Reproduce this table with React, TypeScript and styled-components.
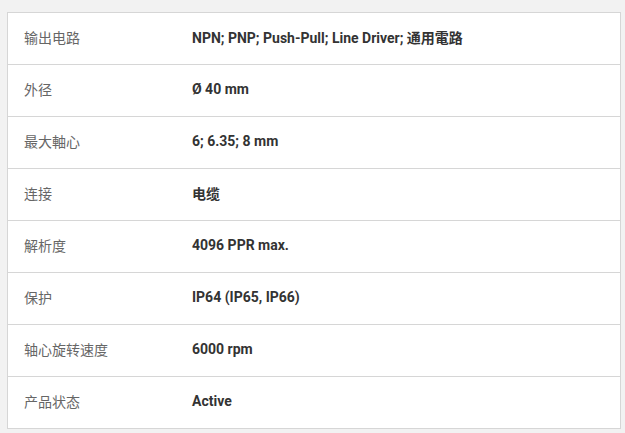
import React from 'react';
import styled, { createGlobalStyle } from 'styled-components';

const GlobalStyle = createGlobalStyle`
    html, body {
        margin: 0;
        padding: 0;
        background: #f2f2f2;
    }
    body {
        font-family: Roboto, "Noto Sans CJK SC", sans-serif;
    }
`;

const specs = [
    { label: '输出电路', value: 'NPN; PNP; Push-Pull; Line Driver; 通用電路' },
    { label: '外径', value: 'Ø 40 mm' },
    { label: '最大軸心', value: '6; 6.35; 8 mm' },
    { label: '连接', value: '电缆' },
    { label: '解析度', value: '4096 PPR max.' },
    { label: '保护', value: 'IP64 (IP65, IP66)' },
    { label: '轴心旋转速度', value: '6000 rpm' },
    { label: '产品状态', value: 'Active' },
];

export default function App() {
    return (
        <>
            <GlobalStyle />
            <Page>
                <SpecTable>
                    <tbody>
                        {specs.map((item, index) => (
                            <Row key={index}>
                                <Label>{item.label}</Label>
                                <Value>{item.value}</Value>
                            </Row>
                        ))}
                    </tbody>
                </SpecTable>
            </Page>
        </>
    );
}

const Page = styled.div`
    padding: 12px 4px 5px 7px;
`;

const SpecTable = styled.table`
    width: 614px;
    border-collapse: collapse;
    background: #fff;
    border: 1px solid #d6d6d6;
`;

const Row = styled.tr`
    height: 52px;
    border-bottom: 1px solid #d6d6d6;
`;

const Label = styled.td`
    width: 136px;
    padding: 0 16px 4px;
    font-size: 14px;
    color: #666;
    font-family: "Noto Sans CJK SC", sans-serif;
    vertical-align: middle;
`;

const Value = styled.td`
    padding: 0 16px 4px;
    font-size: 14px;
    font-weight: bold;
    color: #333;
    font-family: Roboto, "Noto Sans CJK SC", sans-serif;
    vertical-align: middle;
`;
